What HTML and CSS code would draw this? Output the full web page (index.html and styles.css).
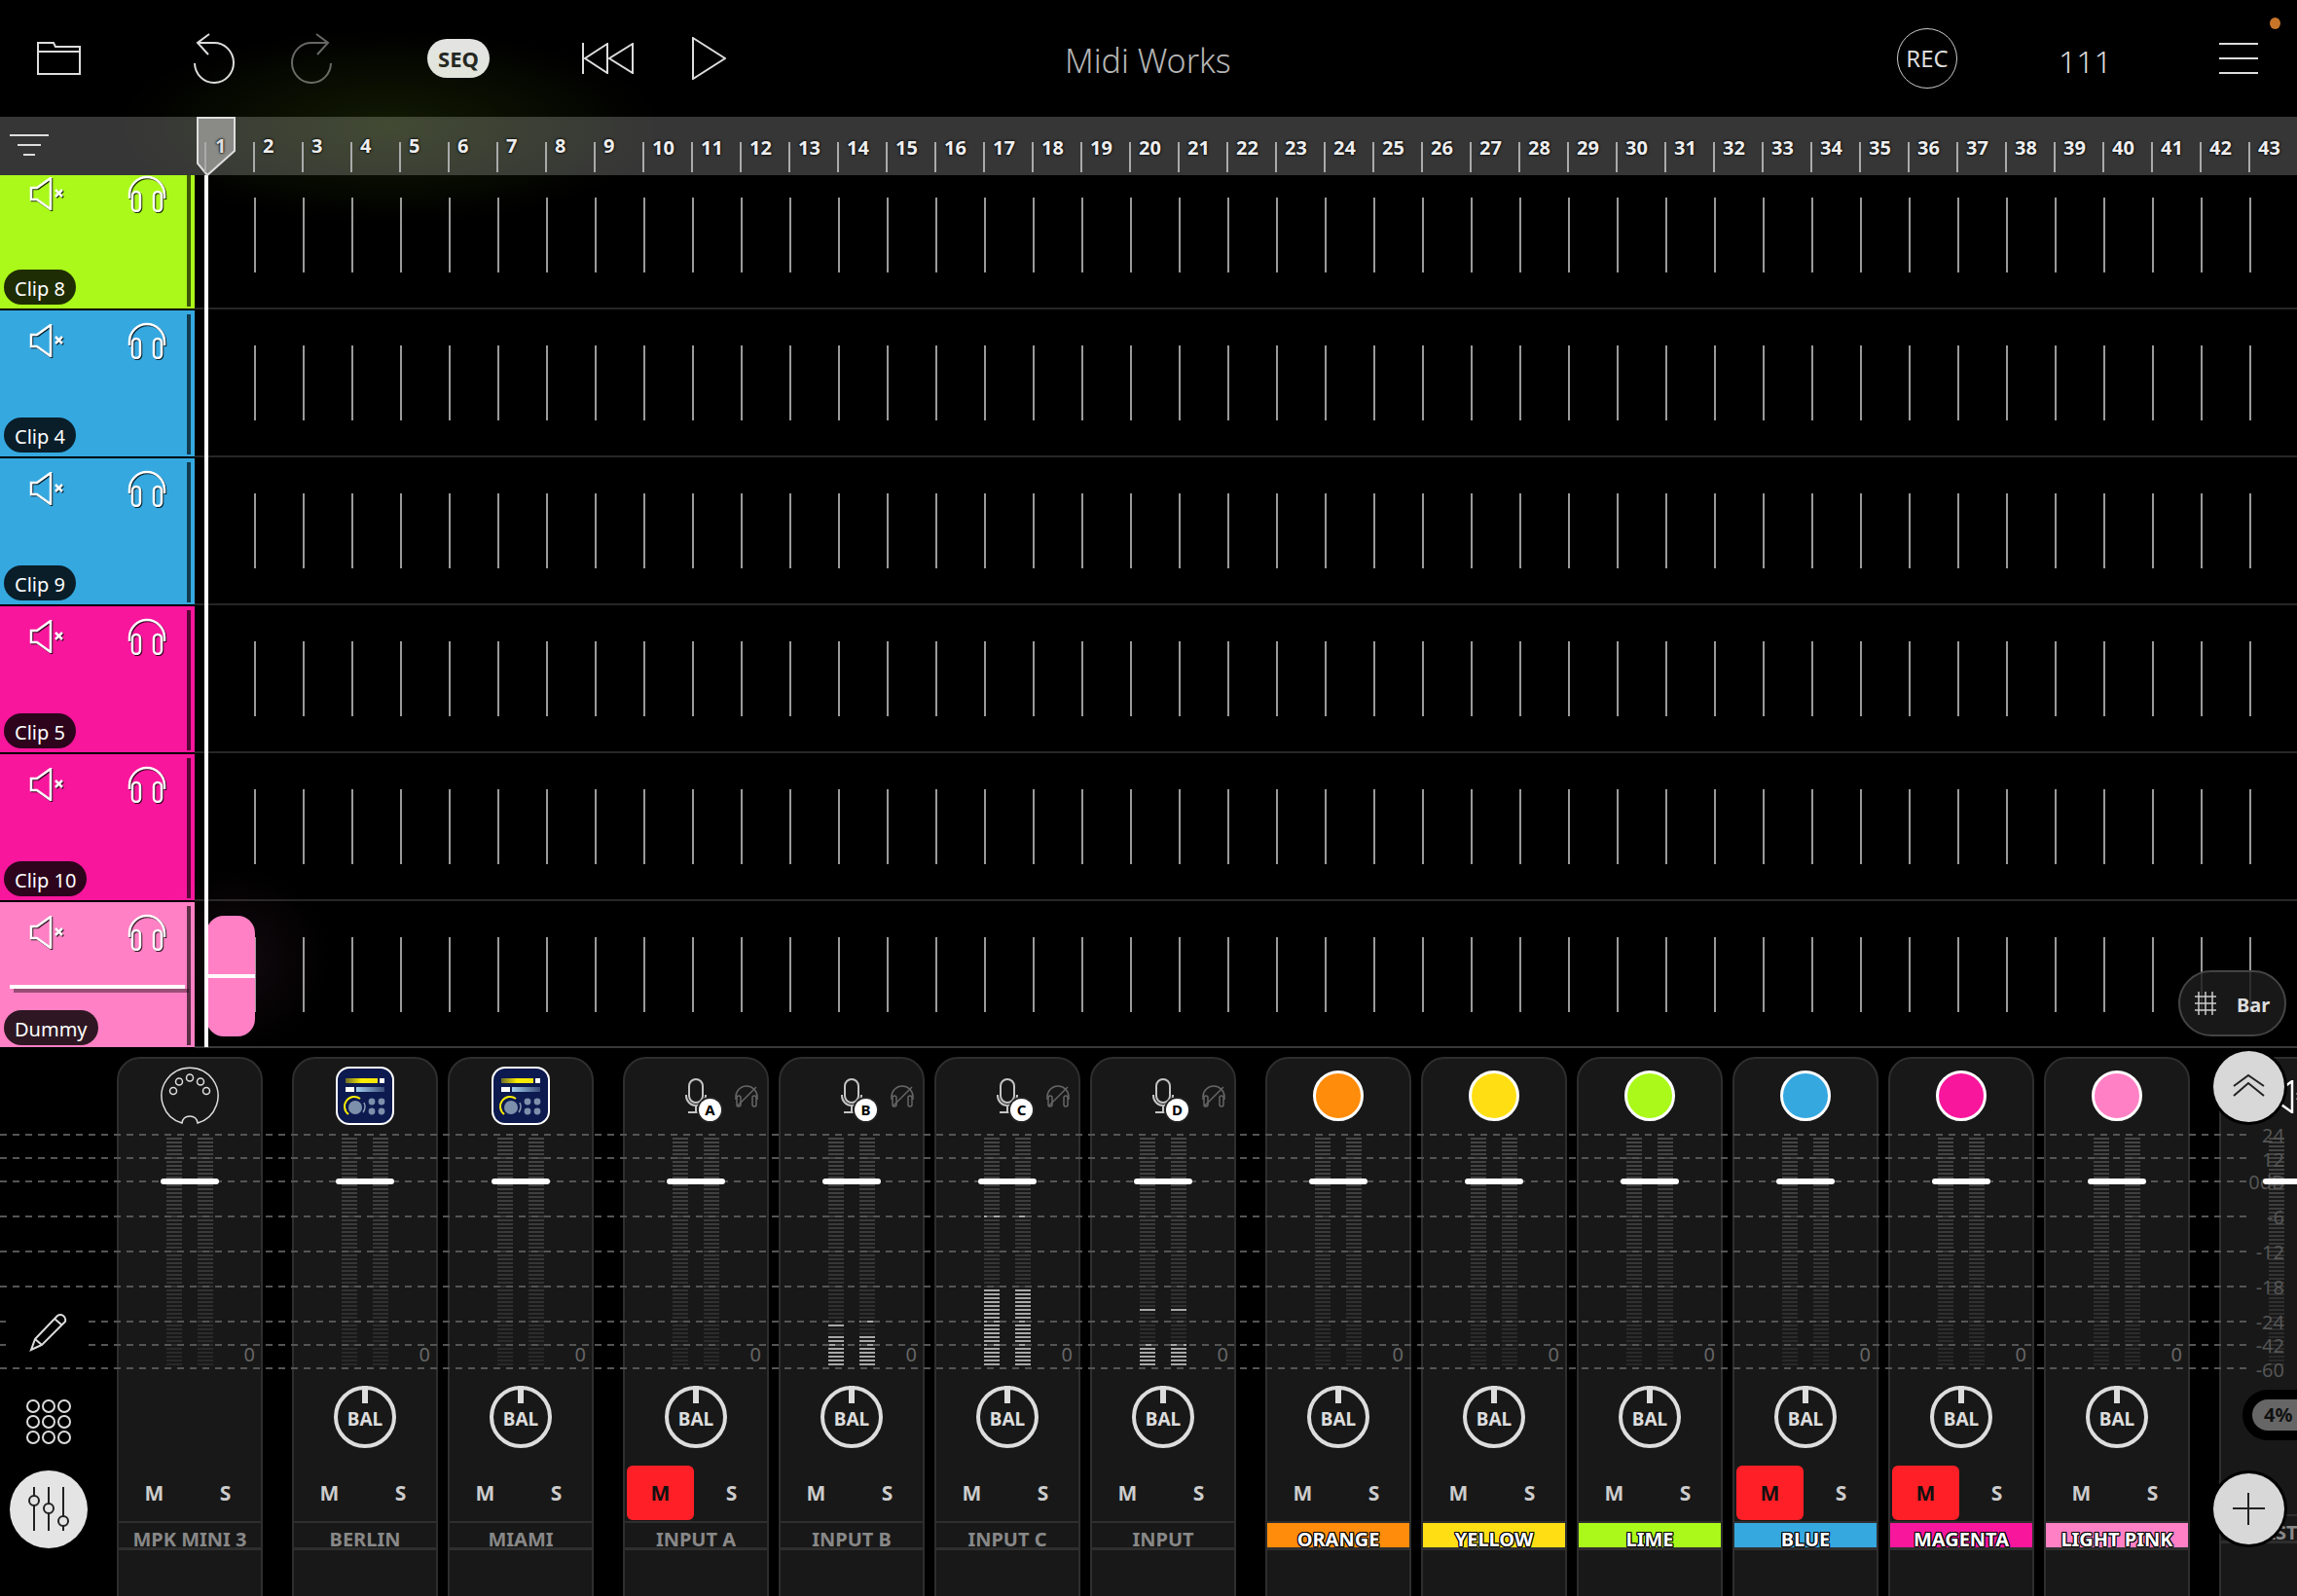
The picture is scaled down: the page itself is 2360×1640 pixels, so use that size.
FILE: index.html
```html
<!DOCTYPE html>
<html lang="en">
<head>
    <meta charset="UTF-8">
    <title>Midi Works</title>
    <link rel="stylesheet" href="styles.css">
</head>
<body>
    <svg class="defs" aria-hidden="true">
        <defs>
            <linearGradient id="yellow-bar" x1="0" x2="1" y1="0" y2="0">
                <stop offset="0" stop-color="#6d6c2a"/>
                <stop offset="0.5" stop-color="#ffee00"/>
                <stop offset="1" stop-color="#f2e60c"/>
            </linearGradient>
            <linearGradient id="blue-bar" x1="0" x2="1" y1="0" y2="0">
                <stop offset="0" stop-color="#a3cfee"/>
                <stop offset="1" stop-color="#3a4c78"/>
            </linearGradient>
        </defs>
        <symbol id="ic-speaker" viewBox="0 0 36 34">
            <path class="line-white" d="M2 11h6L22 1v32L8 23H2z"/>
            <path class="line-white" d="M27 13l7 7M34 13l-7 7"/>
        </symbol>
        <symbol id="ic-phones" viewBox="0 0 40 38">
            <path class="line-white" d="M2 24V20a18 18 0 0 1 36 0v4"/>
            <rect class="line-white" x="5" y="17" width="8" height="20" rx="4"/>
            <rect class="line-white" x="27" y="17" width="8" height="20" rx="4"/>
        </symbol>
        <symbol id="ic-phones-off" viewBox="0 0 26 24">
            <path class="line-off" d="M2 15V12a11 11 0 0 1 22 0v3"/>
            <rect class="line-off" x="3" y="11" width="4" height="11" rx="2"/>
            <rect class="line-off" x="19" y="11" width="4" height="11" rx="2"/>
            <path class="line-off" d="M3 22L23 2"/>
        </symbol>
        <symbol id="ic-midi" viewBox="0 0 60 60">
            <path class="line-thin" d="M22 58A29 29 0 1 1 38 58Q37 51 30 51T22 58z"/>
            <circle class="line-thin" cx="13" cy="25" r="3.5"/>
            <circle class="line-thin" cx="19" cy="15.5" r="3.5"/>
            <circle class="line-thin" cx="30" cy="11.5" r="3.5"/>
            <circle class="line-thin" cx="41" cy="15.5" r="3.5"/>
            <circle class="line-thin" cx="47" cy="25" r="3.5"/>
        </symbol>
        <symbol id="ic-plugin" viewBox="0 0 60 60">
            <rect x="1" y="1" width="58" height="58" rx="13" fill="#0c1a50" stroke="#fff" stroke-width="2"/>
            <rect x="10" y="12" width="33" height="5" fill="url(#yellow-bar)"/>
            <rect x="45" y="12" width="5" height="5" fill="#fff"/>
            <rect x="10" y="21" width="9" height="5" fill="#fff"/>
            <rect x="21" y="21" width="29" height="5" fill="url(#blue-bar)"/>
            <circle cx="20" cy="42" r="7" fill="#7d90ab"/>
            <path d="M25 33A10 10 0 1 0 13 49" fill="none" stroke="#ffee00" stroke-width="2"/>
            <path d="M28 47A10 10 0 0 0 29 37" fill="none" stroke="#8b9ab0" stroke-width="1.5"/>
            <circle cx="37" cy="36" r="3.4" fill="#7d90ab"/>
            <circle cx="47" cy="36" r="3.4" fill="#7d90ab"/>
            <circle cx="37" cy="46" r="3.4" fill="#7d90ab"/>
            <circle cx="47" cy="46" r="3.4" fill="#7d90ab"/>
        </symbol>
        <symbol id="ic-mic" viewBox="0 0 22 36">
            <rect class="line-mic" x="4" y="1" width="14" height="24" rx="7"/>
            <path class="line-mic" d="M1 17v1a10 10 0 0 0 20 0v-1M11 28v7M3 35h16"/>
        </symbol>
    </svg>

    <header class="topbar">
        <svg class="folder" width="45" height="34" viewBox="0 0 45 34"><path class="line" d="M1 33V1h16l2 4h25v28zM1 10h43"/></svg>
        <svg class="undo" width="42" height="53" viewBox="0 0 42 53"><path class="line" d="M16 1L4 10l11 12M4 10h16.500A20 20.500 0 1 1 1 31"/></svg>
        <svg class="redo" width="42" height="53" viewBox="0 0 42 53"><path class="line-dim" d="M16 1L4 10l11 12M4 10h16.500A20 20.500 0 1 1 1 31"/></svg>
        <div class="seq">SEQ</div>
        <svg class="rewind" width="53" height="32" viewBox="0 0 53 32"><path class="line" d="M1 0v32M26 1L3 16l23 15zM52 1L28 16l24 15z"/></svg>
        <svg class="play" width="35" height="44" viewBox="0 0 35 44"><path class="line" d="M1 1l33 21L1 43z"/></svg>
        <div class="title">Midi Works</div>
        <div class="rec">REC</div>
        <div class="tempo">111</div>
        <div class="menu"><i></i><i></i><i></i></div>
        <span class="notify"></span>
    </header>

    <div class="ruler">
        <div class="ruler-head"><i class="w1"></i><i class="w2"></i><i class="w3"></i></div>
        <div class="ruler-bars">
            <span class="bar-no first">1</span><span class="bar-no">2</span><span class="bar-no">3</span><span class="bar-no">4</span><span class="bar-no">5</span><span class="bar-no">6</span><span class="bar-no">7</span><span class="bar-no">8</span><span class="bar-no">9</span>
            <span class="bar-no wide">10</span><span class="bar-no wide">11</span><span class="bar-no wide">12</span><span class="bar-no wide">13</span><span class="bar-no wide">14</span><span class="bar-no wide">15</span><span class="bar-no wide">16</span><span class="bar-no wide">17</span><span class="bar-no wide">18</span><span class="bar-no wide">19</span><span class="bar-no wide">20</span>
            <span class="bar-no wide">21</span><span class="bar-no wide">22</span><span class="bar-no wide">23</span><span class="bar-no wide">24</span><span class="bar-no wide">25</span><span class="bar-no wide">26</span><span class="bar-no wide">27</span><span class="bar-no wide">28</span><span class="bar-no wide">29</span><span class="bar-no wide">30</span>
            <span class="bar-no wide">31</span><span class="bar-no wide">32</span><span class="bar-no wide">33</span><span class="bar-no wide">34</span><span class="bar-no wide">35</span><span class="bar-no wide">36</span><span class="bar-no wide">37</span><span class="bar-no wide">38</span><span class="bar-no wide">39</span><span class="bar-no wide">40</span>
            <span class="bar-no wide">41</span><span class="bar-no wide">42</span><span class="bar-no wide">43</span>
        </div>
    </div>

    <main class="tracks">
        <section class="track track-top">
            <div class="track-head lime">
                <div class="track-icons"><svg class="ic-speaker"><use href="#ic-speaker"/></svg><svg class="ic-phones"><use href="#ic-phones"/></svg></div>
                <div class="clip-name">Clip 8</div>
            </div>
            <div class="lane"></div>
        </section>
        <section class="track">
            <div class="track-head blue">
                <div class="track-icons"><svg class="ic-speaker"><use href="#ic-speaker"/></svg><svg class="ic-phones"><use href="#ic-phones"/></svg></div>
                <div class="clip-name">Clip 4</div>
            </div>
            <div class="lane"></div>
        </section>
        <section class="track">
            <div class="track-head blue">
                <div class="track-icons"><svg class="ic-speaker"><use href="#ic-speaker"/></svg><svg class="ic-phones"><use href="#ic-phones"/></svg></div>
                <div class="clip-name">Clip 9</div>
            </div>
            <div class="lane"></div>
        </section>
        <section class="track">
            <div class="track-head magenta">
                <div class="track-icons"><svg class="ic-speaker"><use href="#ic-speaker"/></svg><svg class="ic-phones"><use href="#ic-phones"/></svg></div>
                <div class="clip-name">Clip 5</div>
            </div>
            <div class="lane"></div>
        </section>
        <section class="track">
            <div class="track-head magenta">
                <div class="track-icons"><svg class="ic-speaker"><use href="#ic-speaker"/></svg><svg class="ic-phones"><use href="#ic-phones"/></svg></div>
                <div class="clip-name">Clip 10</div>
            </div>
            <div class="lane"></div>
        </section>
        <section class="track track-last">
            <div class="track-head pink">
                <div class="track-icons"><svg class="ic-speaker"><use href="#ic-speaker"/></svg><svg class="ic-phones"><use href="#ic-phones"/></svg></div>
                <div class="track-level"></div>
                <div class="clip-name">Dummy</div>
            </div>
            <div class="lane">
                <div class="clip-block"></div>
                <div class="snap">
                    <svg width="22" height="24" viewBox="0 0 22 24"><path class="line-grid" d="M4 0v24M11 0v24M18 0v24M0 5h22M0 12h22M0 19h22"/></svg>
                    <span>Bar</span>
                </div>
            </div>
        </section>
        <div class="playhead"></div>
    </main>

    <svg class="flag" width="40" height="62" viewBox="0 0 40 62"><path d="M1 1h38v34L11 60 1 48z"/></svg>
    <div class="glow-lime"></div>
    <div class="glow-pink"></div>

    <div class="mixer">
        <aside class="tools">
            <div class="tool-pencil">
                <svg width="40" height="40" viewBox="0 0 40 40"><path class="line" d="M6 27L29 3q3-2 6 0t2 6L13 33 2 38zM6 27l7 6M26 6l8 7"/></svg>
            </div>
            <div class="tool-grid">
                <svg width="46" height="46" viewBox="0 0 46 46">
                    <circle class="line" cx="7" cy="7" r="6"/><circle class="line" cx="23" cy="7" r="6"/><circle class="line" cx="39" cy="7" r="6"/>
                    <circle class="line" cx="7" cy="23" r="6"/><circle class="line" cx="23" cy="23" r="6"/><circle class="line" cx="39" cy="23" r="6"/>
                    <circle class="line" cx="7" cy="39" r="6"/><circle class="line" cx="23" cy="39" r="6"/><circle class="line" cx="39" cy="39" r="6"/>
                </svg>
            </div>
            <div class="tool-mixer">
                <svg width="80" height="80" viewBox="0 0 80 80">
                    <path class="line-dark" d="M25 17v9M25 36v26M40 17v17M40 44v18M55 17v30M55 57v5"/>
                    <circle class="line-dark" cx="25" cy="31" r="5"/><circle class="line-dark" cx="40" cy="39" r="5"/><circle class="line-dark" cx="55" cy="52" r="5"/>
                </svg>
            </div>
        </aside>

        <div class="channels group">
            <article class="channel">
                <div class="ch-head"><svg class="ic-midi"><use href="#ic-midi"/></svg></div>
                <div class="meter"><i class="bar"></i><i class="bar"></i><i class="fader"></i><span class="zero">0</span></div>
                <div class="knob-space"></div>
                <div class="ms"><span class="btn">M</span><span class="btn">S</span></div>
                <div class="name">MPK MINI 3</div>
            </article>
        </div>

        <div class="channels group">
            <article class="channel">
                <div class="ch-head"><svg class="ic-plugin"><use href="#ic-plugin"/></svg></div>
                <div class="meter"><i class="bar"></i><i class="bar"></i><i class="fader"></i><span class="zero">0</span></div>
                <div class="knob"><span>BAL</span></div>
                <div class="ms"><span class="btn">M</span><span class="btn">S</span></div>
                <div class="name">BERLIN</div>
            </article>
            <article class="channel">
                <div class="ch-head"><svg class="ic-plugin"><use href="#ic-plugin"/></svg></div>
                <div class="meter"><i class="bar"></i><i class="bar"></i><i class="fader"></i><span class="zero">0</span></div>
                <div class="knob"><span>BAL</span></div>
                <div class="ms"><span class="btn">M</span><span class="btn">S</span></div>
                <div class="name">MIAMI</div>
            </article>
        </div>

        <div class="channels group">
            <article class="channel">
                <div class="ch-head input">
                    <svg class="ic-mic"><use href="#ic-mic"/></svg><b class="badge">A</b>
                    <svg class="ic-phones-off"><use href="#ic-phones-off"/></svg>
                </div>
                <div class="meter"><i class="bar"></i><i class="bar"></i><i class="fader"></i><span class="zero">0</span></div>
                <div class="knob"><span>BAL</span></div>
                <div class="ms"><span class="btn on">M</span><span class="btn">S</span></div>
                <div class="name">INPUT A</div>
            </article>
            <article class="channel">
                <div class="ch-head input">
                    <svg class="ic-mic"><use href="#ic-mic"/></svg><b class="badge">B</b>
                    <svg class="ic-phones-off"><use href="#ic-phones-off"/></svg>
                </div>
                <div class="meter">
                    <i class="bar"><b class="level" style="height:30px"></b><b class="peak" style="bottom:40px"></b></i>
                    <i class="bar"><b class="level" style="height:30px"></b><b class="peak" style="bottom:44px"></b></i>
                    <i class="fader"></i><span class="zero">0</span>
                </div>
                <div class="knob"><span>BAL</span></div>
                <div class="ms"><span class="btn">M</span><span class="btn">S</span></div>
                <div class="name">INPUT B</div>
            </article>
            <article class="channel">
                <div class="ch-head input">
                    <svg class="ic-mic"><use href="#ic-mic"/></svg><b class="badge">C</b>
                    <svg class="ic-phones-off"><use href="#ic-phones-off"/></svg>
                </div>
                <div class="meter">
                    <i class="bar"><b class="level" style="height:78px"></b><b class="peak" style="bottom:152px"></b></i>
                    <i class="bar"><b class="level" style="height:78px"></b><b class="peak" style="bottom:152px"></b></i>
                    <i class="fader"></i><span class="zero">0</span>
                </div>
                <div class="knob"><span>BAL</span></div>
                <div class="ms"><span class="btn">M</span><span class="btn">S</span></div>
                <div class="name">INPUT C</div>
            </article>
            <article class="channel">
                <div class="ch-head input">
                    <svg class="ic-mic"><use href="#ic-mic"/></svg><b class="badge">D</b>
                    <svg class="ic-phones-off"><use href="#ic-phones-off"/></svg>
                </div>
                <div class="meter">
                    <i class="bar"><b class="level" style="height:22px"></b><b class="peak" style="bottom:56px"></b></i>
                    <i class="bar"><b class="level" style="height:22px"></b><b class="peak" style="bottom:56px"></b></i>
                    <i class="fader"></i><span class="zero">0</span>
                </div>
                <div class="knob"><span>BAL</span></div>
                <div class="ms"><span class="btn">M</span><span class="btn">S</span></div>
                <div class="name">INPUT</div>
            </article>
        </div>

        <div class="channels group">
            <article class="channel">
                <div class="ch-head"><span class="dot orange"></span></div>
                <div class="meter"><i class="bar"></i><i class="bar"></i><i class="fader"></i><span class="zero">0</span></div>
                <div class="knob"><span>BAL</span></div>
                <div class="ms"><span class="btn">M</span><span class="btn">S</span></div>
                <div class="name tinted orange">ORANGE</div>
            </article>
            <article class="channel">
                <div class="ch-head"><span class="dot yellow"></span></div>
                <div class="meter"><i class="bar"></i><i class="bar"></i><i class="fader"></i><span class="zero">0</span></div>
                <div class="knob"><span>BAL</span></div>
                <div class="ms"><span class="btn">M</span><span class="btn">S</span></div>
                <div class="name tinted yellow">YELLOW</div>
            </article>
            <article class="channel">
                <div class="ch-head"><span class="dot lime"></span></div>
                <div class="meter"><i class="bar"></i><i class="bar"></i><i class="fader"></i><span class="zero">0</span></div>
                <div class="knob"><span>BAL</span></div>
                <div class="ms"><span class="btn">M</span><span class="btn">S</span></div>
                <div class="name tinted lime">LIME</div>
            </article>
            <article class="channel">
                <div class="ch-head"><span class="dot blue"></span></div>
                <div class="meter"><i class="bar"></i><i class="bar"></i><i class="fader"></i><span class="zero">0</span></div>
                <div class="knob"><span>BAL</span></div>
                <div class="ms"><span class="btn on">M</span><span class="btn">S</span></div>
                <div class="name tinted blue">BLUE</div>
            </article>
            <article class="channel">
                <div class="ch-head"><span class="dot magenta"></span></div>
                <div class="meter"><i class="bar"></i><i class="bar"></i><i class="fader"></i><span class="zero">0</span></div>
                <div class="knob"><span>BAL</span></div>
                <div class="ms"><span class="btn on">M</span><span class="btn">S</span></div>
                <div class="name tinted magenta">MAGENTA</div>
            </article>
            <article class="channel">
                <div class="ch-head"><span class="dot pink"></span></div>
                <div class="meter"><i class="bar"></i><i class="bar"></i><i class="fader"></i><span class="zero">0</span></div>
                <div class="knob"><span>BAL</span></div>
                <div class="ms"><span class="btn">M</span><span class="btn">S</span></div>
                <div class="name tinted pink">LIGHT PINK</div>
            </article>
        </div>

        <article class="channel master">
            <div class="ch-head"><svg class="ic-speaker-master"><use href="#ic-speaker"/></svg></div>
            <div class="meter">
                <i class="bar"></i><i class="bar"></i><i class="fader"></i>
                <span class="db" style="top:-14px">24</span>
                <span class="db" style="top:11px">12</span>
                <span class="db" style="top:34px">0dB</span>
                <span class="db" style="top:70px">-6</span>
                <span class="db" style="top:106px">-12</span>
                <span class="db" style="top:142px">-18</span>
                <span class="db" style="top:178px">-24</span>
                <span class="db" style="top:202px">-42</span>
                <span class="db" style="top:227px">-60</span>
            </div>
            <div class="master-level"><span>4%</span></div>
            <div class="ms"></div>
            <div class="name">MASTER</div>
        </article>

        <svg class="db-lines" width="2310" height="260" viewBox="0 0 2310 260">
            <path d="M0 1H2310M0 25H2310M0 49H2310M0 85H2310M0 121H2310M0 157H2310M0 193H2310M0 217H2310M0 241H2310"/>
        </svg>

        <button class="round-btn btn-up">
            <svg width="73" height="73" viewBox="0 0 73 73"><path class="line-dark" d="M21 36l15-11 16 11M21 46l15-13 16 13"/></svg>
        </button>
        <button class="round-btn btn-add">
            <svg width="73" height="73" viewBox="0 0 73 73"><path class="line-dark" d="M36 20v33M20 36h33"/></svg>
        </button>
    </div>
</body>
</html>
```

FILE: styles.css
```css
* {
    box-sizing: border-box;
}

body {
    position: relative;
    width: 2360px;
    height: 1640px;
    margin: 0;
    overflow: hidden;
    background-color: #000;
    color: #ddd;
    font-family: "Noto Sans", "Open Sans", sans-serif;
}

.defs {
    position: absolute;
    width: 0;
    height: 0;
}

/* shared icon strokes */
.line, .line-dim, .line-dark, .line-white, .line-thin, .line-off, .line-mic, .line-grid {
    fill: none;
    stroke: #ddd;
    stroke-width: 2;
}

.line-dim { stroke: #666; }
.line-dark { stroke: #222; }
.line-white { stroke: #fff; stroke-width: 2.5; }
.line-thin { stroke-width: 1.5; }
.line-off { stroke: #666; stroke-width: 1.5; }
.line-mic { stroke: #c4c4c4; stroke-width: 2; }
.line-grid { stroke: #ccc; stroke-width: 1.5; }

/* track colours */
.lime { background-color: #aaf91a; }
.blue { background-color: #35a8e0; }
.magenta { background-color: #f8169c; }
.pink { background-color: #ff80c4; }
.orange { background-color: #ff8c0a; }
.yellow { background-color: #ffdf14; }

/* top bar */
.topbar {
    display: flex;
    align-items: center;
    height: 120px;
    padding-left: 38px;
}

.undo { margin-left: 116px; }
.redo { margin-left: 58px; transform: scaleX(-1); }
.rewind { margin-left: 95px; }
.play { margin-left: 60px; }

.seq {
    width: 64px;
    height: 40px;
    margin-left: 98px;
    border-radius: 20px;
    background-color: #e4e4e4;
    color: #222;
    font-size: 22px;
    font-weight: 700;
    line-height: 40px;
    text-align: center;
}

.title {
    width: 170px;
    margin: 3px 0 0 348px;
    color: #b5b5b5;
    font-size: 34px;
    font-weight: 300;
    text-align: center;
    white-space: nowrap;
}

.rec {
    width: 62px;
    height: 62px;
    margin-left: 685px;
    border: 1px solid #ccc;
    border-radius: 50%;
    font-size: 24px;
    line-height: 60px;
    text-align: center;
}

.tempo {
    width: 60px;
    margin: 5px 0 0 104px;
    font-size: 32px;
    font-weight: 300;
}

.menu {
    display: flex;
    flex-direction: column;
    gap: 13px;
    width: 40px;
    margin-left: 105px;
}

.menu i {
    height: 2px;
    background-color: #ddd;
}

.notify {
    position: absolute;
    top: 18px;
    left: 2332px;
    width: 11px;
    height: 12px;
    border-radius: 50%;
    background-color: #c8752a;
}

/* ruler */
.ruler {
    display: flex;
    height: 60px;
    background-color: #363636;
}

.ruler-head {
    display: flex;
    flex-direction: column;
    align-items: center;
    gap: 8px;
    width: 60px;
    padding: 18px 0 0;
    margin-right: 151px;
}

.ruler-head i {
    height: 2px;
    background-color: #ddd;
}

.ruler-head .w1 { width: 40px; }
.ruler-head .w2 { width: 24px; }
.ruler-head .w3 { width: 12px; }

.ruler-bars {
    display: flex;
    align-items: flex-start;
    padding-top: 26px;
}

.bar-no {
    flex: none;
    position: relative;
    z-index: 3;
    width: 50px;
    height: 31px;
    border-left: 2px solid #aaa;
    padding-left: 8px;
    color: #eee;
    font-size: 20px;
    font-weight: 700;
    line-height: 8px;
    text-shadow: 0 0 3px #000, 0 0 2px #000;
}

.bar-no.wide {
    padding-top: 2px;
}

.bar-no.first {
    padding-left: 9px;
    color: #ddd;
}

.flag {
    position: absolute;
    top: 120px;
    left: 202px;
    z-index: 2;
}

.flag path {
    fill: #8a8b86;
    stroke: #ddd;
    stroke-width: 2;
}

.glow-lime {
    position: absolute;
    top: 30px;
    left: 120px;
    z-index: 1;
    width: 560px;
    height: 200px;
    background: radial-gradient(closest-side, rgba(170, 249, 26, 0.1), rgba(170, 249, 26, 0));
    pointer-events: none;
}

.glow-pink {
    position: absolute;
    top: 890px;
    left: 140px;
    width: 200px;
    height: 190px;
    background: radial-gradient(closest-side, rgba(255, 128, 196, 0.07), rgba(255, 128, 196, 0));
    pointer-events: none;
}

/* tracks */
.tracks {
    position: relative;
    height: 898px;
}

.track {
    display: flex;
    height: 152px;
}

.track-top { height: 139px; }
.track-last { height: 151px; }

.track-head {
    position: relative;
    display: flex;
    flex-direction: column;
    width: 200px;
    margin-bottom: 2px;
    overflow: hidden;
}

.track-head::after {
    content: "";
    position: absolute;
    top: 4px;
    right: 4px;
    bottom: 2px;
    width: 4px;
    background-color: rgba(0, 0, 0, 0.65);
}

.track-top .track-head::after { top: 0; }

.track-icons {
    display: flex;
    align-items: flex-start;
    margin-top: 12px;
    padding-left: 30px;
    filter: drop-shadow(1.5px 1.5px 0 rgba(0, 0, 0, 0.8));
}

.track-top .track-icons { margin-top: 0; }

.ic-speaker {
    width: 36px;
    height: 34px;
    margin-top: 2px;
}

.ic-phones {
    width: 40px;
    height: 38px;
    margin-left: 65px;
}

.clip-name {
    align-self: flex-start;
    height: 36px;
    margin: auto 0 4px 4px;
    padding: 0 11px;
    border-radius: 18px;
    background-color: rgba(0, 0, 0, 0.82);
    color: #fff;
    font-size: 20px;
    line-height: 40px;
}

.track-last .clip-name { margin-bottom: 2px; }

.track-level {
    position: absolute;
    top: 85px;
    left: 10px;
    width: 180px;
    height: 4px;
    background-color: #fff;
    box-shadow: 4px 4px 0 rgba(0, 0, 0, 0.4);
}

.lane {
    position: relative;
    flex: 1;
    margin-bottom: 1px;
    border-bottom: 2px solid #262626;
    background: linear-gradient(90deg, #9a9a9a 2px, transparent 2px) 61px 36px / 50px 77px repeat-x;
}

.track-top .lane {
    background-position: 61px 23px;
}

.track-last .lane {
    border-bottom-color: #383838;
}

.clip-block {
    position: absolute;
    top: 14px;
    left: 12px;
    width: 50px;
    height: 124px;
    border-radius: 18px;
    background-color: #ff80c4;
}

.clip-block::after {
    content: "";
    position: absolute;
    top: 60px;
    left: 0;
    width: 100%;
    height: 4px;
    background-color: #fff;
}

.snap {
    position: absolute;
    top: 70px;
    right: 11px;
    display: flex;
    align-items: center;
    width: 111px;
    height: 68px;
    padding-left: 15px;
    border: 2px solid #444;
    border-radius: 34px;
    background-color: rgba(28, 28, 28, 0.85);
}

.snap span {
    margin: 3px 0 0 21px;
    color: #ddd;
    font-size: 20px;
    font-weight: 700;
}

.playhead {
    position: absolute;
    top: 0;
    left: 210px;
    width: 4px;
    height: 896px;
    background-color: #fff;
}

/* mixer */
.mixer {
    position: relative;
    display: flex;
    height: 562px;
    padding-top: 8px;
    overflow: hidden;
}

.tools {
    position: relative;
    z-index: 2;
    flex: none;
    width: 120px;
}

.tool-pencil {
    display: flex;
    align-items: center;
    justify-content: center;
    width: 84px;
    height: 60px;
    margin: 253px 0 0 6px;
    padding-left: 4px;
    background-color: #000;
}

.tool-grid {
    display: flex;
    justify-content: center;
    width: 100px;
    margin: 39px 0 0;
}

.tool-mixer {
    width: 80px;
    height: 80px;
    margin: 27px 0 0 10px;
    border-radius: 50%;
    background-color: #e4e4e4;
}

.channels {
    display: flex;
    flex: none;
    gap: 10px;
}

.group { margin-right: 30px; }

.channel {
    display: flex;
    flex: none;
    flex-direction: column;
    width: 150px;
    height: 640px;
    border: 2px solid #2e2e2e;
    border-radius: 24px 24px 0 0;
    background-color: #181818;
}

.ch-head {
    position: relative;
    display: flex;
    flex: none;
    align-items: center;
    justify-content: center;
    height: 75px;
}

.ic-midi, .ic-plugin {
    width: 60px;
    height: 60px;
}

.dot {
    width: 52px;
    height: 52px;
    border: 3px solid #fff;
    border-radius: 50%;
}

.ch-head.input {
    padding-top: 1px;
}

.ic-mic {
    width: 22px;
    height: 36px;
}

.badge {
    position: absolute;
    top: 41px;
    left: 76px;
    width: 23px;
    height: 23px;
    border-radius: 50%;
    background-color: #fff;
    box-shadow: 0 0 0 2px #222;
    color: #000;
    font-size: 15px;
    line-height: 23px;
    text-align: center;
}

.ic-phones-off {
    position: absolute;
    top: 27px;
    left: 112px;
    width: 26px;
    height: 24px;
}

.ic-speaker-master {
    position: absolute;
    top: 22px;
    left: 51px;
    width: 36px;
    height: 34px;
}

.meter {
    position: relative;
    display: flex;
    flex: none;
    justify-content: center;
    gap: 16px;
    height: 234px;
    margin-top: 6px;
}

.bar {
    position: relative;
    display: block;
    width: 16px;
    background:
        repeating-linear-gradient(to top, transparent 0 2px, #181818 2px 4px),
        linear-gradient(#464646, #282828);
}

.level {
    position: absolute;
    bottom: 0;
    left: 0;
    width: 100%;
    background: repeating-linear-gradient(to top, #a8a8a8 0 2px, transparent 2px 4px);
}

.peak {
    position: absolute;
    left: 0;
    width: 100%;
    height: 2px;
    background-color: #a8a8a8;
}

.fader {
    position: absolute;
    top: 42px;
    left: 43px;
    z-index: 2;
    width: 60px;
    height: 6px;
    border-radius: 3px;
    background-color: #fff;
}

.zero {
    position: absolute;
    top: 209px;
    right: 6px;
    color: #666;
    font-size: 20px;
    line-height: 28px;
}

.knob, .knob-space {
    position: relative;
    flex: none;
    width: 64px;
    height: 64px;
    margin: 21px auto 0;
}

.knob {
    display: flex;
    align-items: center;
    justify-content: center;
    border: 4px solid #ddd;
    border-radius: 50%;
}

.knob::before {
    content: "";
    position: absolute;
    top: -4px;
    left: 25px;
    width: 6px;
    height: 18px;
    background-color: #ddd;
}

.knob span {
    margin-top: 3px;
    font-size: 19px;
    font-weight: 700;
    line-height: 24px;
}

.ms {
    display: grid;
    flex: none;
    grid-template-columns: 73px 73px;
    height: 56px;
    margin-top: 18px;
}

.btn {
    margin: 0 2px;
    border-radius: 6px;
    color: #ccc;
    font-size: 21px;
    font-weight: 700;
    line-height: 56px;
    text-align: center;
}

.btn.on {
    background-color: #ff1f26;
    color: #111;
}

.name {
    flex: none;
    height: 30px;
    margin-top: 1px;
    padding-top: 6px;
    border-top: 2px solid #2e2e2e;
    border-bottom: 3px solid #2e2e2e;
    color: #888;
    font-size: 20px;
    font-weight: 700;
    line-height: 22px;
    text-align: center;
    white-space: nowrap;
}

.name.tinted {
    color: #fff;
    text-shadow: 1px 0 0 #000, -1px 0 0 #000, 0 1px 0 #000, 0 -1px 0 #000, 1px 1px 0 #000, -1px -1px 0 #000, 1px -1px 0 #000, -1px 1px 0 #000;
}

.master .name { padding-right: 20px; }
.master .fader { width: 80px; }

.db {
    position: absolute;
    right: 81px;
    color: #555;
    font-size: 20px;
    line-height: 24px;
    white-space: nowrap;
}

.master-level {
    flex: none;
    width: 130px;
    height: 52px;
    margin: 25px 0 0 22px;
    padding: 10px;
    border-radius: 26px;
    background-color: #000;
}

.master-level span {
    display: block;
    height: 32px;
    padding-left: 12px;
    border-radius: 16px;
    background-color: #666;
    color: #111;
    font-size: 20px;
    font-weight: 700;
    line-height: 32px;
}

.master .ms { margin-top: 19px; }

.db-lines {
    position: absolute;
    top: 87px;
    left: 0;
    z-index: 1;
}

.db-lines path {
    fill: none;
    stroke: #555;
    stroke-width: 2;
    stroke-dasharray: 7 6;
}

.round-btn {
    position: absolute;
    left: 2274px;
    z-index: 3;
    width: 73px;
    height: 73px;
    padding: 0;
    border: 0;
    border-radius: 50%;
    background-color: #d8d8d8;
    box-shadow: 0 0 0 3px #000;
}

.btn-up { top: 2px; }
.btn-add { top: 436px; }
```
